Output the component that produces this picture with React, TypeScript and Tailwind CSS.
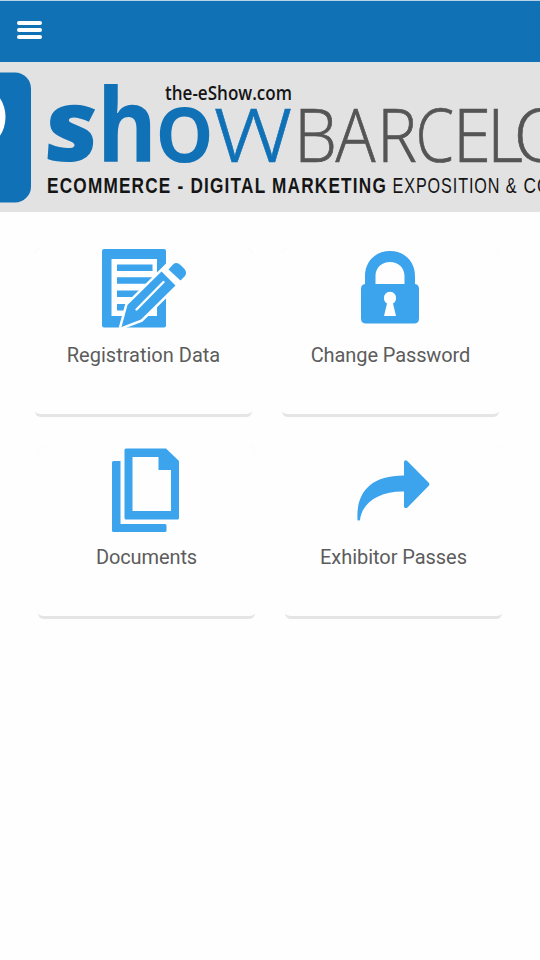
import type { ReactNode } from "react";

function Glyph({ x, len, size, weight, fill, y = 161.5, stroke = 0, children }: {
  x: number; len: number; size: number; weight: number; fill: string; y?: number; stroke?: number; children: string;
}) {
  return (
    <text x={x} y={y} fontSize={size} fontWeight={weight} fill={fill} stroke={fill} strokeWidth={stroke}
      textLength={len} lengthAdjust="spacingAndGlyphs" fontFamily="'Open Sans', sans-serif">{children}</text>
  );
}

function Banner() {
  return (
    <svg className="block h-[150px] w-full bg-[#e2e2e2]" viewBox="0 62 540 150">
      <rect x="-90" y="72.5" width="121" height="130" rx="16" fill="#1071b7" />
      <ellipse cx="-14" cy="117" rx="19.5" ry="27" fill="#fff" />
      <g transform="translate(70.5 161.5) skewX(-4) translate(-72 -161.5)">
        <Glyph x={44.5} len={53} size={100} weight={800} fill="#1071b7">s</Glyph>
      </g>
      <Glyph x={97} len={60} size={102} weight={700} fill="#1071b7">h</Glyph>
      <Glyph x={155} len={59} size={100} weight={600} fill="#1071b7">o</Glyph>
      <Glyph x={214} len={78} size={100} weight={300} fill="#1071b7" stroke={0.6}>w</Glyph>
      <Glyph x={294} len={43} size={74.5} weight={300} fill="#555" stroke={0.7}>B</Glyph>
      <Glyph x={335.5} len={40} size={74.5} weight={300} fill="#555" stroke={0.7}>A</Glyph>
      <Glyph x={377} len={40} size={74.5} weight={300} fill="#555" stroke={0.7}>R</Glyph>
      <Glyph x={415.5} len={38.5} size={74.5} weight={300} fill="#555" stroke={0.7}>C</Glyph>
      <Glyph x={453} len={38} size={74.5} weight={300} fill="#555" stroke={0.7}>E</Glyph>
      <Glyph x={487} len={36} size={74.5} weight={300} fill="#555" stroke={0.7}>L</Glyph>
      <Glyph x={513.5} len={57} size={74.5} weight={300} fill="#555" stroke={0.7}>O</Glyph>
      <Glyph x={165} len={127} size={19.5} weight={600} fill="#151515" y={99.8}>the-eShow.com</Glyph>
      <g fontFamily="'Liberation Sans', sans-serif" fontSize="21.5" fill="#151515">
        <text x="47" y="192.500" fontWeight="700" letterSpacing="1.500" textLength="340" lengthAdjust="spacingAndGlyphs">ECOMMERCE - DIGITAL MARKETING</text>
        <text x="392.500" y="192.500" letterSpacing="1.200" textLength="125" lengthAdjust="spacingAndGlyphs">EXPOSITION &amp;</text>
        <text x="523.500" y="192.500" letterSpacing="1.200" textLength="28" lengthAdjust="spacingAndGlyphs">CO</text>
      </g>
    </svg>
  );
}

function RegistrationIcon() {
  return (
    <svg className="h-20 w-[88px]" viewBox="100 248 88 80" fill="#3ba4ed">
      <rect x="102" y="249" width="64" height="78.500" rx="2" />
      <path d="M111.500 259H157V316H111.500Z" fill="#fff" />
      <path d="M117 264.500h35.500v6.500H117zM117 277.200h35.500v6.500H117zM117 290.500h35.500v6.500H117zM117 304h22v6.500h-22z" />
      <path d="M121.500 327 127.500 305 161.500 271.500 168 265 182 279 175.500 285.500 141 319.500Z" fill="#fff" stroke="#fff" strokeWidth="5" />
      <path d="M121.500 327 127.500 305 161.500 271.500 175.500 285.500 141 319.500Z" />
      <path d="M136.500 309.500 163.500 282" stroke="#fff" strokeWidth="2.400" strokeLinecap="round" />
      <path d="M168.500 269.500 173 264.500Q176.500 261.500 180.500 265L184.500 269Q187.700 273 184.500 276.500L180.500 280.500Z" />
    </svg>
  );
}

function LockIcon() {
  return (
    <svg className="h-20 w-[88px]" viewBox="347 248 88 80" fill="#3ba4ed">
      <path fillRule="evenodd" d="M365 284V276C365 261 376 251 390 251S415 261 415 276V284Q419 284.500 419 289V318.500Q419 323.500 414 323.500H366Q361 323.500 361 318.500V289Q361 284.500 365 284ZM375.500 284H404.500V276C404.500 267.500 398 262 390 262S375.500 267.500 375.500 276Z" />
      <path fill="#fff" d="M387 303.500A6.200 6.200 0 1 1 393 303.500L396 316H384Z" />
    </svg>
  );
}

function DocumentsIcon() {
  return (
    <svg className="h-[88px] w-[88px]" viewBox="103 446 88 88" fill="#3ba4ed">
      <path d="M113.500 461H120.500V524H165Q166.500 524 166.500 525.500V530.500Q166.500 532 165 532H113.500Q112 532 112 530.500V462.500Q112 461 113.500 461Z" />
      <path fillRule="evenodd" d="M126 448.500H166L179 461V518Q179 519.500 177.500 519.500H126Q124.500 519.500 124.500 518V450Q124.500 448.500 126 448.500ZM132.500 457V511H171V470H158.500V457Z" />
    </svg>
  );
}

function ShareArrowIcon() {
  return (
    <svg className="h-[88px] w-[88px]" viewBox="350 446 88 88" fill="#3ba4ed">
      <path d="M404 475.500V462Q404.500 459.500 407 460.700L429 483Q429.800 484.300 429 485.500L407.500 507.500Q404.500 509 404 506.500V491.500C380 491 362 502 360 520Q358.500 521 357.500 520C356 494 369 475.500 404 475.500Z" />
    </svg>
  );
}

function Card({ icon, label, size, textClass }: { icon: ReactNode; label: string; size: string; textClass: string }) {
  return (
    <button className={`flex w-[217px] flex-col items-center rounded-md border-b-[3px] border-[#e5e5e5] bg-[#fefefe] shadow-[0_0_1px_#eeeeee] ${size}`}>
      {icon}
      <span className={`whitespace-nowrap text-[20px] leading-6 text-[#5c5c5c] ${textClass}`}>{label}</span>
    </button>
  );
}

export default function App() {
  return (
    <div className="h-[960px] w-[540px] overflow-hidden bg-[#fefefe] font-['Roboto',sans-serif]">
      <header className="flex h-[62px] items-center border-t border-[#b5d2e8] bg-[#1071b5] pl-[17px]">
        <button aria-label="Menu" className="mb-1 flex w-[25px] flex-col gap-[3px]">
          <span className="h-1 rounded-full bg-white" />
          <span className="h-1 rounded-full bg-white" />
          <span className="h-1 rounded-full bg-white" />
        </button>
      </header>
      <Banner />
      <main className="pt-9">
        <div className="flex gap-[30px] pl-[35px]">
          <Card icon={<RegistrationIcon />} label="Registration Data" size="h-[169px]" textClass="mt-[15px]" />
          <Card icon={<LockIcon />} label="Change Password" size="h-[169px]" textClass="mt-[15px] tracking-[-0.1px]" />
        </div>
        <div className="mt-[29px] flex gap-[30px] pl-[38px]">
          <Card icon={<DocumentsIcon />} label="Documents" size="h-[173px]" textClass="mt-[11px] tracking-[-0.1px]" />
          <Card icon={<ShareArrowIcon />} label="Exhibitor Passes" size="h-[173px]" textClass="mt-[11px] tracking-[-0.05px]" />
        </div>
      </main>
    </div>
  );
}
